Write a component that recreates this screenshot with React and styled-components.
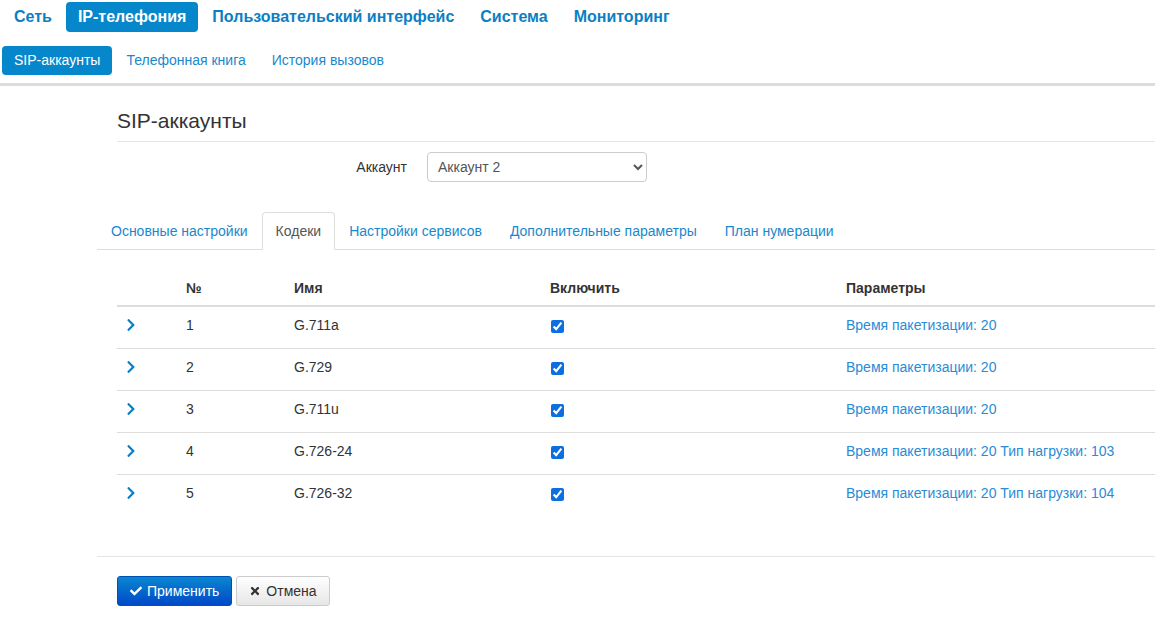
import React from 'react';
import styled, { createGlobalStyle } from 'styled-components';
import { FaChevronRight, FaCheck, FaTimes } from 'react-icons/fa';

const GlobalStyle = createGlobalStyle`
  body {
    margin: 0;
    font-family: "Liberation Sans", Arial, sans-serif;
    font-size: 14px;
    color: #333;
    background: #fff;
  }
`;

const codecs = [
  { n: 1, name: 'G.711a', params: 'Время пакетизации: 20' },
  { n: 2, name: 'G.729', params: 'Время пакетизации: 20' },
  { n: 3, name: 'G.711u', params: 'Время пакетизации: 20' },
  { n: 4, name: 'G.726-24', params: 'Время пакетизации: 20 Тип нагрузки: 103' },
  { n: 5, name: 'G.726-32', params: 'Время пакетизации: 20 Тип нагрузки: 104' },
];

const App = () => {
  return (
    <>
      <GlobalStyle />
      <MainNav>
        <NavItem>Сеть</NavItem>
        <NavItem $active>IP-телефония</NavItem>
        <NavItem>Пользовательский интерфейс</NavItem>
        <NavItem>Система</NavItem>
        <NavItem>Мониторинг</NavItem>
      </MainNav>
      <SubNav>
        <SubItem $active>SIP-аккаунты</SubItem>
        <SubItem>Телефонная книга</SubItem>
        <SubItem>История вызовов</SubItem>
      </SubNav>
      <Content>
        <Title>SIP-аккаунты</Title>
        <FormRow>
          <Label>Аккаунт</Label>
          <Select defaultValue="2">
            <option value="1">Аккаунт 1</option>
            <option value="2">Аккаунт 2</option>
          </Select>
        </FormRow>
        <Tabs>
          <Tab>Основные настройки</Tab>
          <Tab $active>Кодеки</Tab>
          <Tab>Настройки сервисов</Tab>
          <Tab>Дополнительные параметры</Tab>
          <Tab>План нумерации</Tab>
        </Tabs>
        <Table>
          <colgroup>
            <col style={{ width: 61 }} />
            <col style={{ width: 108 }} />
            <col style={{ width: 256 }} />
            <col style={{ width: 296 }} />
            <col />
          </colgroup>
          <thead>
            <tr>
              <Th></Th>
              <Th>№</Th>
              <Th>Имя</Th>
              <Th>Включить</Th>
              <Th>Параметры</Th>
            </tr>
          </thead>
          <tbody>
            {codecs.map((c) => (
              <tr key={c.n}>
                <Td><Chevron><FaChevronRight /></Chevron></Td>
                <Td>{c.n}</Td>
                <Td>{c.name}</Td>
                <Td><Check type="checkbox" checked readOnly /></Td>
                <Td><ParamLink>{c.params}</ParamLink></Td>
              </tr>
            ))}
          </tbody>
        </Table>
        <Footer>
          <Button $primary><FaCheck /> Применить</Button>
          <Button><FaTimes /> Отмена</Button>
        </Footer>
      </Content>
    </>
  );
};

const MainNav = styled.div`
  display: flex;
  align-items: center;
  gap: 2px;
  padding: 2px 2px 0;
  height: 30px;
`;

const NavItem = styled.div`
  padding: 0 12px;
  height: 30px;
  line-height: 30px;
  border-radius: 4px;
  font-size: 16px;
  font-weight: bold;
  color: ${(p) => (p.$active ? '#fff' : '#0b7fc4')};
  background: ${(p) => (p.$active ? '#0787cb' : 'transparent')};
`;

const SubNav = styled.div`
  display: flex;
  align-items: center;
  gap: 2px;
  padding: 14px 2px 8px;
  height: 29px;
  border-bottom: 3px solid #dcdcdc;
`;

const SubItem = styled.div`
  padding: 0 12px;
  height: 29px;
  line-height: 29px;
  border-radius: 4px;
  font-size: 14px;
  color: ${(p) => (p.$active ? '#fff' : '#1a88cc')};
  background: ${(p) => (p.$active ? '#0787cb' : 'transparent')};
`;

const Content = styled.div`
  margin-left: 97px;
`;

const Title = styled.h2`
  margin: 23px 0 0 20px;
  padding-bottom: 8px;
  font-size: 21px;
  font-weight: normal;
  color: #333;
  border-bottom: 1px solid #e5e5e5;
`;

const FormRow = styled.div`
  display: flex;
  align-items: center;
  margin-top: 10px;
`;

const Label = styled.label`
  width: 310px;
  text-align: right;
  padding-right: 20px;
  font-size: 14px;
  color: #333;
`;

const Select = styled.select`
  width: 220px;
  height: 30px;
  padding: 0 6px;
  font-family: "Liberation Sans", Arial, sans-serif;
  font-size: 14px;
  color: #555;
  background: #fff;
  border: 1px solid #ccc;
  border-radius: 4px;
`;

const Tabs = styled.div`
  display: flex;
  margin-top: 30px;
  border-bottom: 1px solid #ddd;
`;

const Tab = styled.div`
  padding: 0 13px;
  height: 36px;
  line-height: 36px;
  margin-bottom: -1px;
  font-size: 14px;
  color: ${(p) => (p.$active ? '#555' : '#1a88cc')};
  background: ${(p) => (p.$active ? '#fff' : 'transparent')};
  border: 1px solid ${(p) => (p.$active ? '#ddd' : 'transparent')};
  border-bottom-color: ${(p) => (p.$active ? '#fff' : 'transparent')};
  border-radius: 4px 4px 0 0;
`;

const Table = styled.table`
  margin: 20px 0 0 20px;
  width: calc(100% - 20px);
  border-collapse: collapse;
  table-layout: fixed;
`;

const Th = styled.th`
  text-align: left;
  padding: 8px;
  height: 19px;
  font-size: 14px;
  font-weight: bold;
  color: #333;
  border-bottom: 2px solid #ddd;
`;

const Td = styled.td`
  padding: 0 8px 5px;
  height: 36px;
  font-size: 14px;
  color: #333;
  vertical-align: middle;
  border-top: 1px solid #ddd;
  tbody tr:first-child & { border-top: none; }
`;

const Chevron = styled.span`
  display: inline-flex;
  color: #0b7fc4;
  font-size: 14px;
  padding-top: 2px;
  margin-left: -1px;
`;

const Check = styled.input`
  margin: 0 0 0 1px;
  width: 13px;
  height: 13px;
  vertical-align: middle;
  accent-color: #0b6fe0;
`;

const ParamLink = styled.span`
  color: #2a8bd6;
`;

const Footer = styled.div`
  margin-top: 40px;
  border-top: 1px solid #e5e5e5;
  padding: 19px 0 0 20px;
  display: flex;
  gap: 4px;
`;

const Button = styled.button`
  display: inline-flex;
  align-items: center;
  gap: 5px;
  height: 30px;
  padding: 0 12px;
  font-family: "Liberation Sans", Arial, sans-serif;
  font-size: 14px;
  border-radius: 3px;
  border: 1px solid ${(p) => (p.$primary ? '#0050b3' : '#ccc')};
  color: ${(p) => (p.$primary ? '#fff' : '#333')};
  background: ${(p) =>
    p.$primary
      ? 'linear-gradient(to bottom, #0a87d0, #0048c8)'
      : 'linear-gradient(to bottom, #fff, #e6e6e6)'};
  svg { font-size: 12px; }
`;

export default App;
